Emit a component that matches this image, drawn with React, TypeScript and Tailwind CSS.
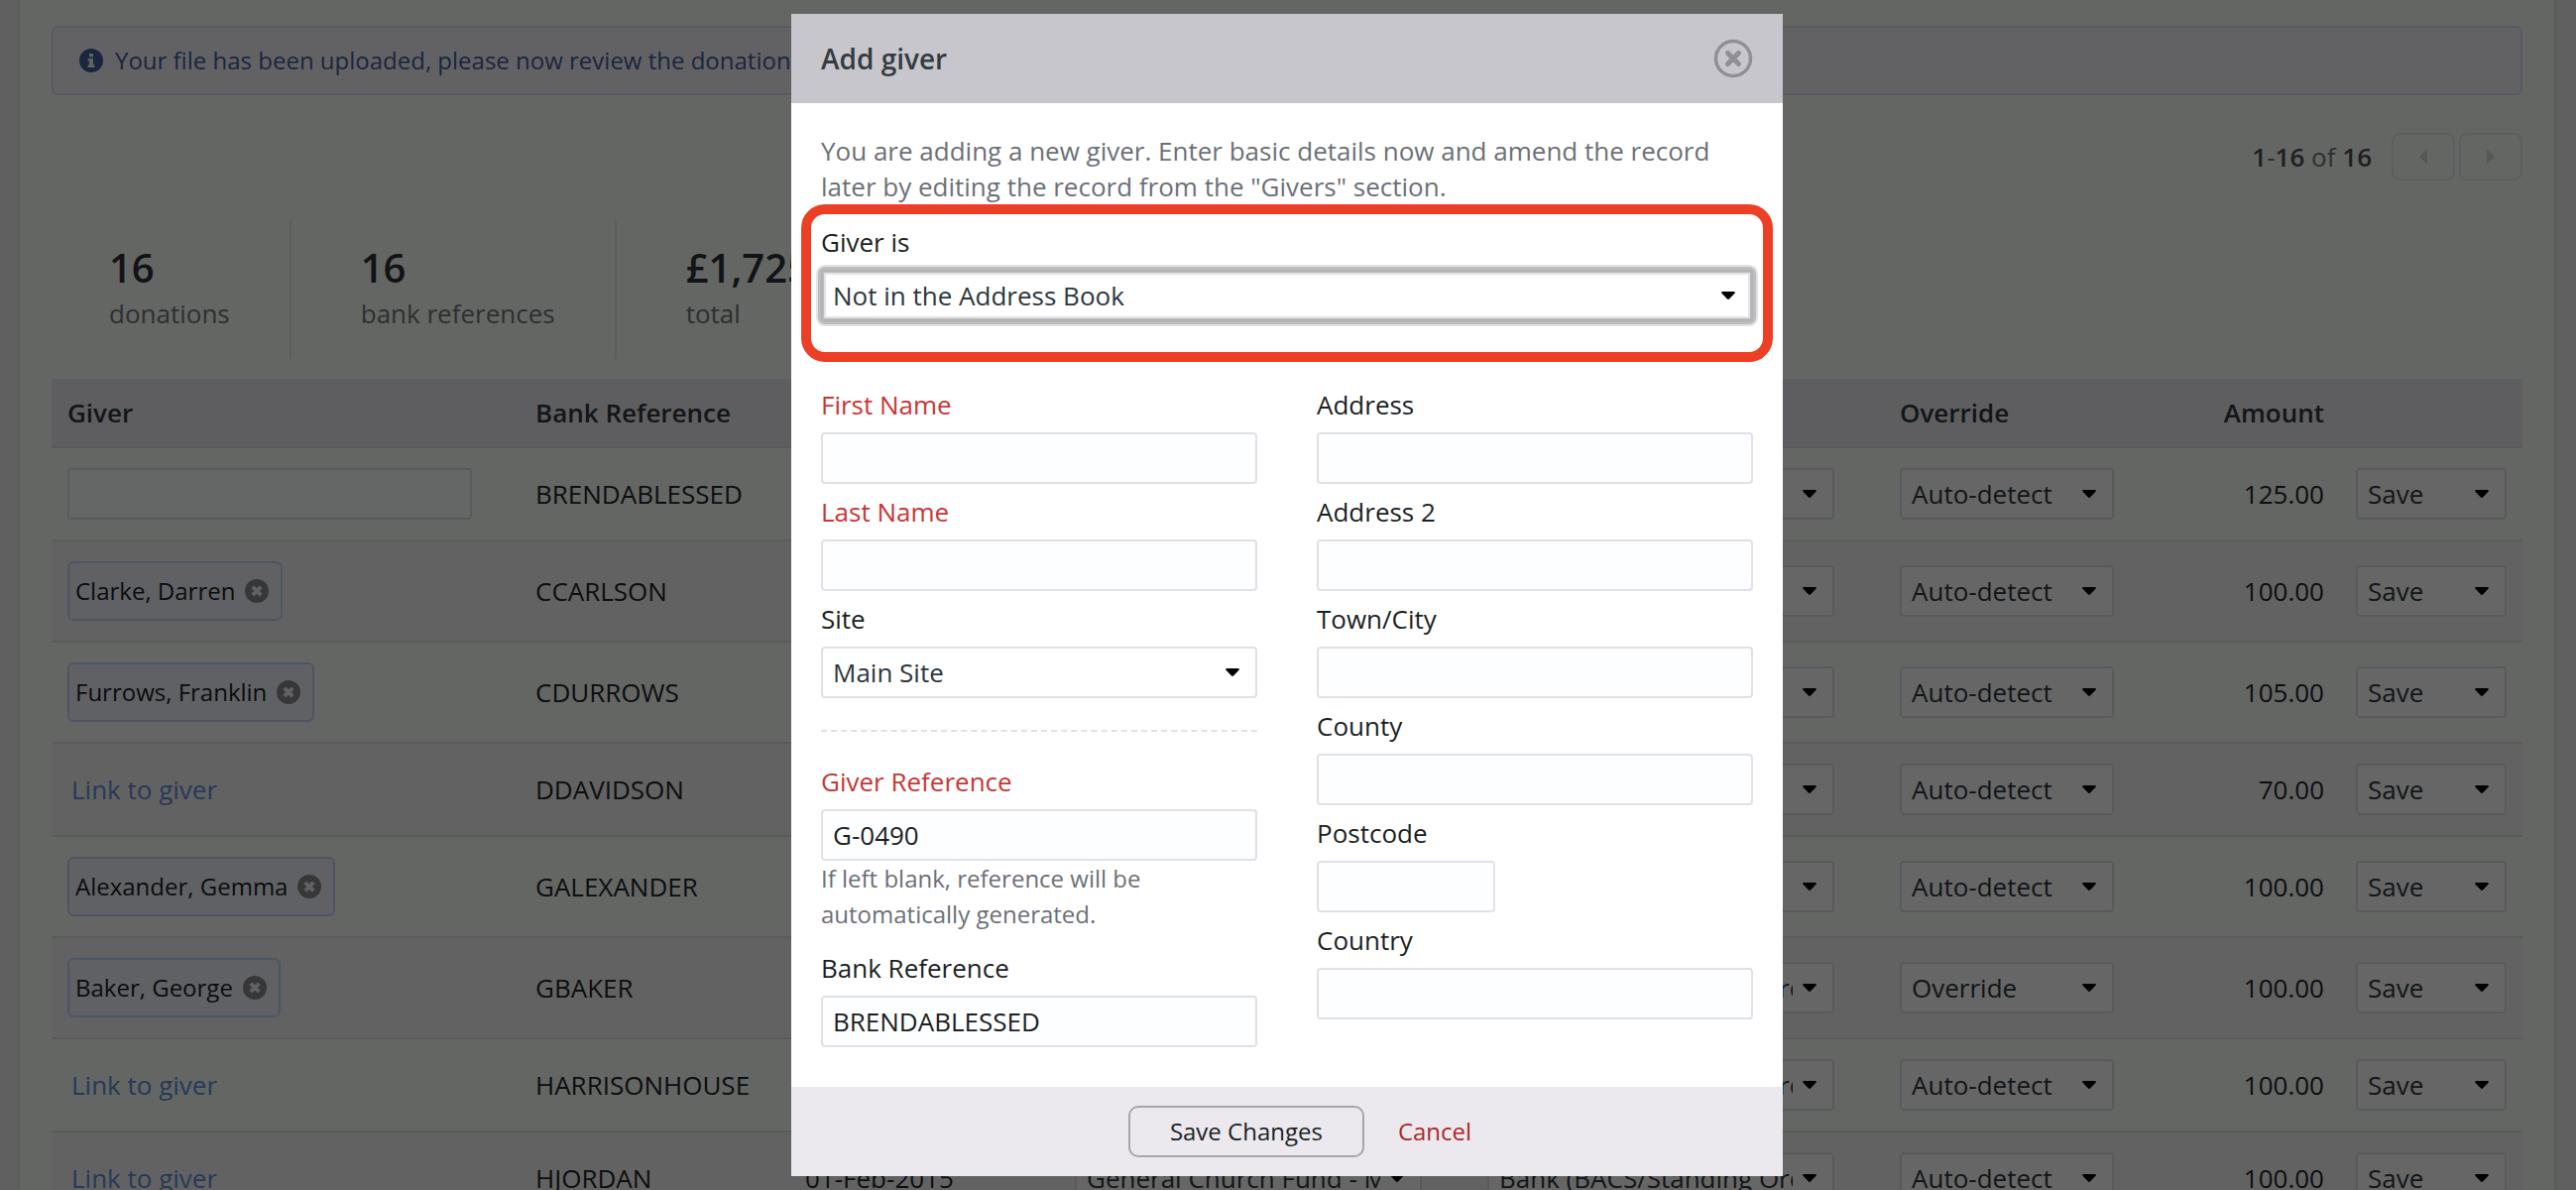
import React, { useState } from "react";

type Donation = {
  giver?: string;
  search?: boolean;
  reference: string;
  method: string;
  override: string;
  amount: string;
};

const STANDING_ORDER = "Bank (BACS/Standing Order)";

const donations: Donation[] = [
  { search: true, reference: "BRENDABLESSED", method: "Cheque", override: "Auto-detect", amount: "125.00" },
  { giver: "Clarke, Darren", reference: "CCARLSON", method: "Cheque", override: "Auto-detect", amount: "100.00" },
  { giver: "Furrows, Franklin", reference: "CDURROWS", method: "Cheque", override: "Auto-detect", amount: "105.00" },
  { reference: "DDAVIDSON", method: "Cheque", override: "Auto-detect", amount: "70.00" },
  { giver: "Alexander, Gemma", reference: "GALEXANDER", method: "Cheque", override: "Auto-detect", amount: "100.00" },
  { giver: "Baker, George", reference: "GBAKER", method: STANDING_ORDER, override: "Override", amount: "100.00" },
  { reference: "HARRISONHOUSE", method: STANDING_ORDER, override: "Auto-detect", amount: "100.00" },
  { reference: "HJORDAN", method: STANDING_ORDER, override: "Auto-detect", amount: "100.00" },
];

const stats = [
  { value: "16", label: "donations" },
  { value: "16", label: "bank references" },
  { value: "£1,725.00", label: "total" },
];

const inputClass =
  "block h-[52px] w-full rounded-sm border-2 border-[#e1e0e8] bg-[#fdfeff] px-2.5 text-[26px] text-[#1b1f24] outline-none";

type SelectProps = {
  id?: string;
  label?: string;
  value: string;
  options?: string[];
  focused?: boolean;
};

const Select: React.FC<SelectProps> = ({ id, label, value, options = [], focused }) => (
  <div className="relative">
    <select
      id={id}
      aria-label={label}
      defaultValue={value}
      className={`block h-[52px] w-full appearance-none rounded-sm border-2 bg-white pl-2.5 pr-10 text-[26px] text-[#2e373e] outline-none ${
        focused
          ? "border-[#b2b3b5] shadow-[0_0_0_3px_#bdbdbf,0_0_0_5px_#e3e3e5,inset_0_0_0_1px_#bdbdbf,inset_0_0_0_3px_#e3e3e5]"
          : "border-[#e1e0e8]"
      }`}
    >
      <option>{value}</option>
      {options.map((option) => (
        <option key={option}>{option}</option>
      ))}
    </select>
    <svg
      viewBox="0 0 14 8"
      className="pointer-events-none absolute right-[18px] top-[22px] h-2 w-3.5"
      aria-hidden="true"
    >
      <path d="M1 0h12q1.500 1 .5 1.800L8 7.500q-1 .8-2 0L.5 1.800Q-.5 1 1 0z" fill="#000" />
    </svg>
  </div>
);

type FieldProps = {
  id: string;
  label: string;
  required?: boolean;
  defaultValue?: string;
  narrow?: boolean;
};

const Field: React.FC<FieldProps> = ({ id, label, required, defaultValue, narrow }) => (
  <div className="flex flex-col gap-2.5">
    <label htmlFor={id} className={required ? "text-[#c83735]" : "text-[#1b1f24]"}>
      {label}
    </label>
    <div className={narrow ? "w-[180px]" : "w-full"}>
      <input id={id} type="text" defaultValue={defaultValue} className={inputClass} />
    </div>
  </div>
);

const GiverCell: React.FC<{ row: Donation }> = ({ row }) => {
  if (row.search) {
    return (
      <div className="max-w-[408px]">
        <input type="text" aria-label="Search givers" className={inputClass} />
      </div>
    );
  }

  if (row.giver) {
    return (
      <span className="inline-flex h-[60px] items-center gap-2.5 rounded-md border-2 border-[#bed4fa] bg-[#f0f3fc] pl-1.5 pr-3 align-top text-2xl text-[#1b1f24]">
        {row.giver}
        <button type="button" aria-label={`Remove ${row.giver}`}>
          <svg viewBox="0 0 24 24" className="block h-6 w-6">
            <circle cx="12" cy="12" r="12" fill="#8a8a8a" />
            <path d="M7.800 7.800l8.400 8.400M16.200 7.800l-8.400 8.400" stroke="#f0f3fc" strokeWidth="4" />
          </svg>
        </button>
      </span>
    );
  }

  return (
    <a href="#link" className="pl-1 text-[#6190dc]">
      Link to giver
    </a>
  );
};

const DonationsPage: React.FC = () => (
  <main className="ml-[18px] mr-5 min-h-screen border-x-2 border-[#e4e3e3] bg-[#fafefb] px-8 pt-[26px]">
    {/* Upload notice */}
    <div className="flex h-[70px] items-center gap-3 rounded-md border-2 border-[#dedfff] bg-[#f5f6fc] px-[26px] text-2xl text-[#40609a]">
      <svg viewBox="0 0 24 24" className="h-6 w-6" aria-hidden="true">
        <circle cx="12" cy="12" r="12" fill="#40609a" />
        <path d="M10 5h4v3.500h-4zM8.500 10H14v6.500h1.500V19h-7v-2.500H10v-4H8.500z" fill="#f5f6fc" />
      </svg>
      <p>Your file has been uploaded, please now review the donations below.</p>
    </div>

    {/* Pager */}
    <div className="mt-[38px] flex items-center justify-end gap-1 text-[#737678]">
      <p className="mr-4">
        <b className="font-semibold text-[#4b4f55]">1</b>-<b className="font-semibold text-[#4b4f55]">16</b> of{" "}
        <b className="font-semibold text-[#4b4f55]">16</b>
      </p>
      <button
        type="button"
        aria-label="Previous page"
        className="flex h-12 w-16 items-center justify-center rounded-lg border-2 border-[#ebe9ee]"
      >
        <svg viewBox="0 0 8 16" className="h-4 w-2">
          <path d="M8 0v16L0 8z" fill="#d8d8d8" />
        </svg>
      </button>
      <button
        type="button"
        aria-label="Next page"
        className="flex h-12 w-16 items-center justify-center rounded-lg border-2 border-[#ebe9ee]"
      >
        <svg viewBox="0 0 8 16" className="h-4 w-2">
          <path d="M0 0v16l8-8z" fill="#d8d8d8" />
        </svg>
      </button>
    </div>

    {/* Totals */}
    <dl className="mt-10 flex">
      {stats.map((stat) => (
        <div
          key={stat.label}
          className="flex h-[140px] flex-col-reverse justify-center gap-1 border-r-2 border-[#e6e5e8] pl-[70px] pr-[60px] pb-1 first:pl-[58px] last:border-r-0"
        >
          <dt className="text-[#737678]">{stat.label}</dt>
          <dd className="text-[40px] leading-[48px] font-semibold text-[#2e3138]">{stat.value}</dd>
        </div>
      ))}
    </dl>

    <table className="mt-5 w-full table-fixed border-separate border-spacing-0 text-left text-[#222528]">
      <colgroup>
        <col />
        <col className="w-[272px]" />
        <col className="w-[272px]" />
        <col className="w-[416px]" />
        <col className="w-[416px]" />
        <col className="w-[264px]" />
        <col className="w-[196px]" />
        <col className="w-[184px]" />
      </colgroup>
      <thead>
        <tr className="h-[70px] bg-[#ebe9ee] text-[#2e373e] *:border-b-2 *:border-[#e0dfe3] *:px-4 *:font-semibold">
          <th>Giver</th>
          <th>Bank Reference</th>
          <th>Date</th>
          <th>Fund</th>
          <th>Method</th>
          <th>Override</th>
          <th className="text-right">Amount</th>
          <th>
            <span className="sr-only">Action</span>
          </th>
        </tr>
      </thead>
      <tbody>
        {donations.map((row) => (
          <tr
            key={row.reference}
            className="h-[94px] even:bg-[#f8f6f6] *:border-b-2 *:border-[#e4e3e5] *:px-4"
          >
            <td className="py-5">
              <GiverCell row={row} />
            </td>
            <td>{row.reference}</td>
            <td>01-Feb-2015</td>
            <td>
              <div className="w-[350px]">
                <Select label="Fund" value="General Church Fund - Main Site" />
              </div>
            </td>
            <td>
              <div className="w-[350px]">
                <Select label="Method" value={row.method} />
              </div>
            </td>
            <td>
              <div className="w-[216px]">
                <Select label="Override" value={row.override} />
              </div>
            </td>
            <td className="text-right">{row.amount}</td>
            <td>
              <Select label="Action" value="Save" options={["Skip"]} />
            </td>
          </tr>
        ))}
      </tbody>
    </table>
  </main>
);

const AddGiverModal: React.FC<{ onClose: () => void }> = ({ onClose }) => (
  <div className="fixed inset-0 flex items-start justify-center overflow-hidden bg-black/60 pt-3.5 pr-0.5">
    <form
      role="dialog"
      aria-labelledby="add-giver-title"
      className="w-full max-w-[1000px] bg-white"
      onSubmit={(e) => e.preventDefault()}
    >
      <header className="flex h-[90px] items-center justify-between bg-[#c7c6cc] px-[30px]">
        <h2 id="add-giver-title" className="text-[28px] font-semibold text-[#343c40]">
          Add giver
        </h2>
        <button type="button" aria-label="Close" onClick={onClose}>
          <svg viewBox="0 0 40 40" className="block h-10 w-10" fill="none" stroke="#8f9096">
            <circle cx="20" cy="20" r="17.500" strokeWidth="3.500" />
            <path d="M14.500 14.500l11 11M25.500 14.500l-11 11" strokeWidth="5" strokeLinecap="round" />
          </svg>
        </button>
      </header>

      <div className="px-[30px] pt-[30px] pb-10">
        <p className="text-[#6c7078]">
          You are adding a new giver. Enter basic details now and amend the record later by editing the record from
          the "Givers" section.
        </p>

        {/* Highlighted choice */}
        <div className="-mx-5 flex flex-col gap-2.5 rounded-[24px] border-[10px] border-[#ec4026] px-2.5 pt-2.5 pb-[31px]">
          <label htmlFor="giver-is" className="text-[#1b1f24]">
            Giver is
          </label>
          <Select id="giver-is" value="Not in the Address Book" options={["In the Address Book"]} focused />
        </div>

        <div className="mt-[25px] grid grid-cols-2 items-start gap-x-[60px]">
          <div className="flex flex-col gap-2.5">
            <Field id="first-name" label="First Name" required />
            <Field id="last-name" label="Last Name" required />
            <div className="flex flex-col gap-2.5">
              <label htmlFor="site" className="text-[#1b1f24]">
                Site
              </label>
              <Select id="site" value="Main Site" />
            </div>
            <hr className="my-[22px] border-t-2 border-dashed border-[#e1e0e8]" />
            <div>
              <Field id="giver-reference" label="Giver Reference" required defaultValue="G-0490" />
              <p className="mb-2 text-2xl leading-9 text-[#6c7078]">
                If left blank, reference will be automatically generated.
              </p>
            </div>
            <Field id="bank-reference" label="Bank Reference" defaultValue="BRENDABLESSED" />
          </div>

          <div className="flex flex-col gap-2.5">
            <Field id="address" label="Address" />
            <Field id="address-2" label="Address 2" />
            <Field id="town" label="Town/City" />
            <Field id="county" label="County" />
            <Field id="postcode" label="Postcode" narrow />
            <Field id="country" label="Country" />
          </div>
        </div>
      </div>

      <footer className="flex h-[90px] items-center justify-center gap-[34px] bg-[#ebe9ee] pl-[26px] text-2xl">
        <button
          type="submit"
          className="h-[52px] rounded-[10px] border-2 border-[#a5a7aa] px-10 text-[#1b1f24]"
        >
          Save Changes
        </button>
        <button type="button" className="text-[#a92a2a]" onClick={onClose}>
          Cancel
        </button>
      </footer>
    </form>
  </div>
);

export default function App() {
  const [open, setOpen] = useState(true);

  return (
    <div className="h-screen overflow-hidden bg-[#f1efef] font-['Open_Sans','Noto_Sans',sans-serif] text-[26px] leading-9">
      <DonationsPage />
      {open && <AddGiverModal onClose={() => setOpen(false)} />}
    </div>
  );
}
